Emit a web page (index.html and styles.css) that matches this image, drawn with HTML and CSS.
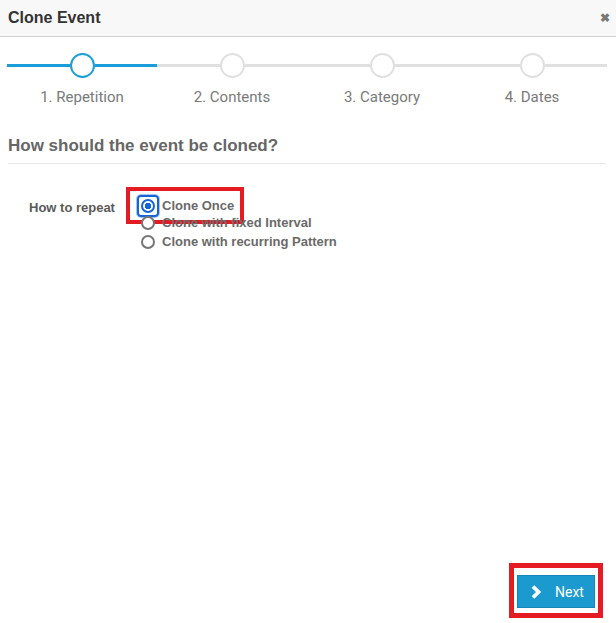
FILE: index.html
```html
<!DOCTYPE html>
<html lang="en">
<head>
    <meta charset="UTF-8">
    <title>Clone Event</title>
    <link rel="stylesheet" href="styles.css">
</head>
<body>
<div class="dialog">

    <!-- Header -->
    <div class="header">
        <span class="titre">Clone Event</span>
        <span class="close">&#10006;</span>
    </div>

    <!-- Wizard steps -->
    <div class="steps">
        <div class="step active">
            <div class="track"><span class="line done"></span><span class="dot"></span><span class="line done"></span></div>
            <div class="label">1. Repetition</div>
        </div>
        <div class="step">
            <div class="track"><span class="line"></span><span class="dot"></span><span class="line"></span></div>
            <div class="label">2. Contents</div>
        </div>
        <div class="step">
            <div class="track"><span class="line"></span><span class="dot"></span><span class="line"></span></div>
            <div class="label">3. Category</div>
        </div>
        <div class="step">
            <div class="track"><span class="line"></span><span class="dot"></span><span class="line"></span></div>
            <div class="label">4. Dates</div>
        </div>
    </div>

    <div class="contenu">
        <h3 class="question">How should the event be cloned?</h3>

        <div class="form-row">
            <label class="form-label">How to repeat</label>
            <div class="choix">
                <div class="radio-row first">
                    <span class="focus"><span class="radio checked"></span></span>
                    <span>Clone Once</span>
                    <span class="marque"></span>
                </div>
                <div class="radio-row">
                    <span class="radio"></span>
                    <span>Clone with fixed Interval</span>
                </div>
                <div class="radio-row">
                    <span class="radio"></span>
                    <span>Clone with recurring Pattern</span>
                </div>
            </div>
        </div>
    </div>

    <!-- Footer -->
    <div class="footer">
        <div class="marque-btn">
            <button class="suivant">
                <svg width="12" height="14" viewBox="0 0 12 14"><path d="M2 1.5 L7.5 7 L2 12.5" fill="none" stroke="#fff" stroke-width="3.8"/></svg>
                <span>Next</span>
            </button>
        </div>
    </div>

</div>
</body>
</html>
```

FILE: styles.css
```css
body {
    margin: 0;
    font-family: "Liberation Sans", Arial, sans-serif;
    background: #fff;
}

.dialog {
    display: flex;
    flex-direction: column;
    height: 623px;
}

/* En-tete */
.header {
    height: 36px;
    background: #f8f8f8;
    border-bottom: 1px solid #cfcfcf;
    display: flex;
    align-items: center;
    justify-content: space-between;
    padding: 0 6px 0 8px;
}

.titre {
    font-size: 16px;
    font-weight: bold;
    color: #333;
}

.close {
    font-size: 12px;
    color: #777;
    font-weight: bold;
}

/* Etapes */
.steps {
    display: grid;
    grid-template-columns: repeat(4, 150px);
    padding: 16px 0 0 7px;
}

.track {
    display: flex;
    align-items: center;
    height: 25px;
}

.line {
    flex: 1;
    height: 3px;
    background: #e0e0e0;
}

.line.done {
    background: #1a9ed9;
}

.dot {
    width: 21px;
    height: 21px;
    border: 2px solid #e0e0e0;
    border-radius: 50%;
    background: #fff;
}

.step.active .dot {
    border-color: #1a9ed9;
}

.label {
    text-align: center;
    font-family: Roboto, "Liberation Sans", sans-serif;
    font-size: 15px;
    color: #7a7a7a;
    margin-top: 10px;
}

/* Contenu */
.contenu {
    flex: 1;
}

.question {
    margin: 30px 10px 0 8px;
    padding-bottom: 7px;
    border-bottom: 1px solid #e8e8e8;
    font-size: 17px;
    color: #666;
}

.form-row {
    display: flex;
    margin-top: 30px;
    padding-left: 29px;
    font-size: 13px;
    font-weight: bold;
    color: #6a6a6a;
}

.form-label {
    width: 112px;
    color: #5a5a5a;
    padding-top: 6px;
}

.radio-row {
    display: flex;
    align-items: center;
    gap: 7px;
    height: 19px;
    position: relative;
}

.radio-row.first {
    height: 23px;
    margin-bottom: -4px;
    margin-left: -4px;
    gap: 3px;
}

.radio {
    width: 10px;
    height: 10px;
    border: 2px solid #767676;
    border-radius: 50%;
    background: #fff;
}

.radio.checked {
    border-color: #1565d8;
    background: radial-gradient(circle, #1565d8 0 3px, #fff 3.5px);
}

.focus {
    display: flex;
    padding: 2px;
    border: 2px solid #1565d8;
    border-radius: 4px;
    box-shadow: 0 0 0 1px #a8c4ef;
}

/* cadre rouge d'annotation */
.marque {
    position: absolute;
    left: -11px;
    top: -7px;
    width: 110px;
    height: 29px;
    border: 4px solid #e41b23;
}

.footer {
    display: flex;
    justify-content: flex-end;
    padding: 0 13px 5px 0;
}

.marque-btn {
    border: 5px solid #e41b23;
    padding: 7px 3px 5px 3px;
}

.suivant {
    display: flex;
    align-items: center;
    gap: 12px;
    width: 78px;
    height: 33px;
    padding: 0 0 0 13px;
    background: #1b9ad0;
    border: 1px solid #1787b8;
    color: #fff;
    font-family: Roboto, "Liberation Sans", sans-serif;
    font-size: 14px;
    cursor: pointer;
}
```
